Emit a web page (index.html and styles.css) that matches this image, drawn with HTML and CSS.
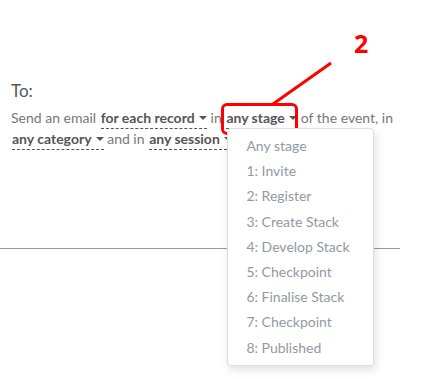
FILE: index.html
```html
<!DOCTYPE html>
<html lang="en">
<head>
    <meta charset="UTF-8">
    <title>Email rule</title>
    <link rel="stylesheet" href="styles.css">
</head>
<body>
    <section class="rule">
        <h2 class="rule-title">To:</h2>
        <div class="rule-text">
            Send an email <span class="pick">for each record <span class="caret"></span></span> in
            <span class="pick pick-open">any stage <span class="caret"></span>
                <span class="highlight"></span>
                <ul class="menu">
                    <li>Any stage</li>
                    <li>1: Invite</li>
                    <li>2: Register</li>
                    <li>3: Create Stack</li>
                    <li>4: Develop Stack</li>
                    <li>5: Checkpoint</li>
                    <li>6: Finalise Stack</li>
                    <li>7: Checkpoint</li>
                    <li>8: Published</li>
                </ul>
            </span> of the event, in
            <span class="pick">any category <span class="caret"></span></span> and in
            <span class="pick">any session <span class="caret"></span></span>
        </div>
    </section>
    <hr class="divider">

    <!-- annotation -->
    <svg class="pointer" width="70" height="50" viewBox="0 0 70 50">
        <line x1="60" y1="2" x2="2" y2="43" stroke="#f00" stroke-width="3"/>
    </svg>
    <span class="step">2</span>
</body>
</html>
```

FILE: styles.css
```css
body {
    margin: 0;
    padding: 0;
    font-family: 'Lato', sans-serif;
    background-color: white;
    color: #666;
    position: relative;
    height: 379px;
    overflow: hidden;
}
.rule {
    padding: 79px 0 0 11px;
    width: 395px;
    height: 148px;
}
.rule-title {
    margin: 0 0 5px 0;
    font-size: 17px;
    font-weight: 400;
    color: #555;
    line-height: 24px;
}
.rule-text {
    margin: 0;
    font-size: 14px;
    line-height: 20px;
    color: #777;
}
.pick {
    position: relative;
    font-weight: 700;
    color: #555;
    border-bottom: 1px dashed #555;
    padding-bottom: 2px;
    margin-left: 1px;
}
.pick-open {
    display: inline-block;
    line-height: 18px;
    padding-bottom: 1px;
}
.caret {
    display: inline-block;
    width: 0;
    height: 0;
    border-left: 4px solid transparent;
    border-right: 4px solid transparent;
    border-top: 4px solid #555;
    vertical-align: 3px;
    margin-left: 1px;
}
.highlight {
    position: absolute;
    left: -5px;
    top: -6px;
    width: 71px;
    height: 26px;
    border: 3px solid #f00;
    border-radius: 6px;
}
.menu {
    position: absolute;
    left: 1px;
    top: 19px;
    width: 145px;
    margin: 0;
    padding: 4px 0 5px;
    list-style: none;
    background-color: white;
    border: 1px solid #ddd;
    border-radius: 4px;
    box-shadow: 2px 4px 8px rgba(0, 0, 0, 0.12);
    z-index: 2;
}
.menu li {
    padding-left: 18px;
    height: 25.2px;
    line-height: 25px;
    font-weight: 400;
    font-size: 14px;
    color: #8f9aa3;
}
.divider {
    margin: 21px 0 0 0;
    width: 400px;
    border: 0;
    border-top: 1px solid #999;
}
.pointer {
    position: absolute;
    left: 271px;
    top: 61px;
}
.step {
    position: absolute;
    left: 354px;
    top: 26px;
    font-family: 'Open Sans', sans-serif;
    font-weight: 700;
    font-size: 25px;
    color: #f00;
}
```
